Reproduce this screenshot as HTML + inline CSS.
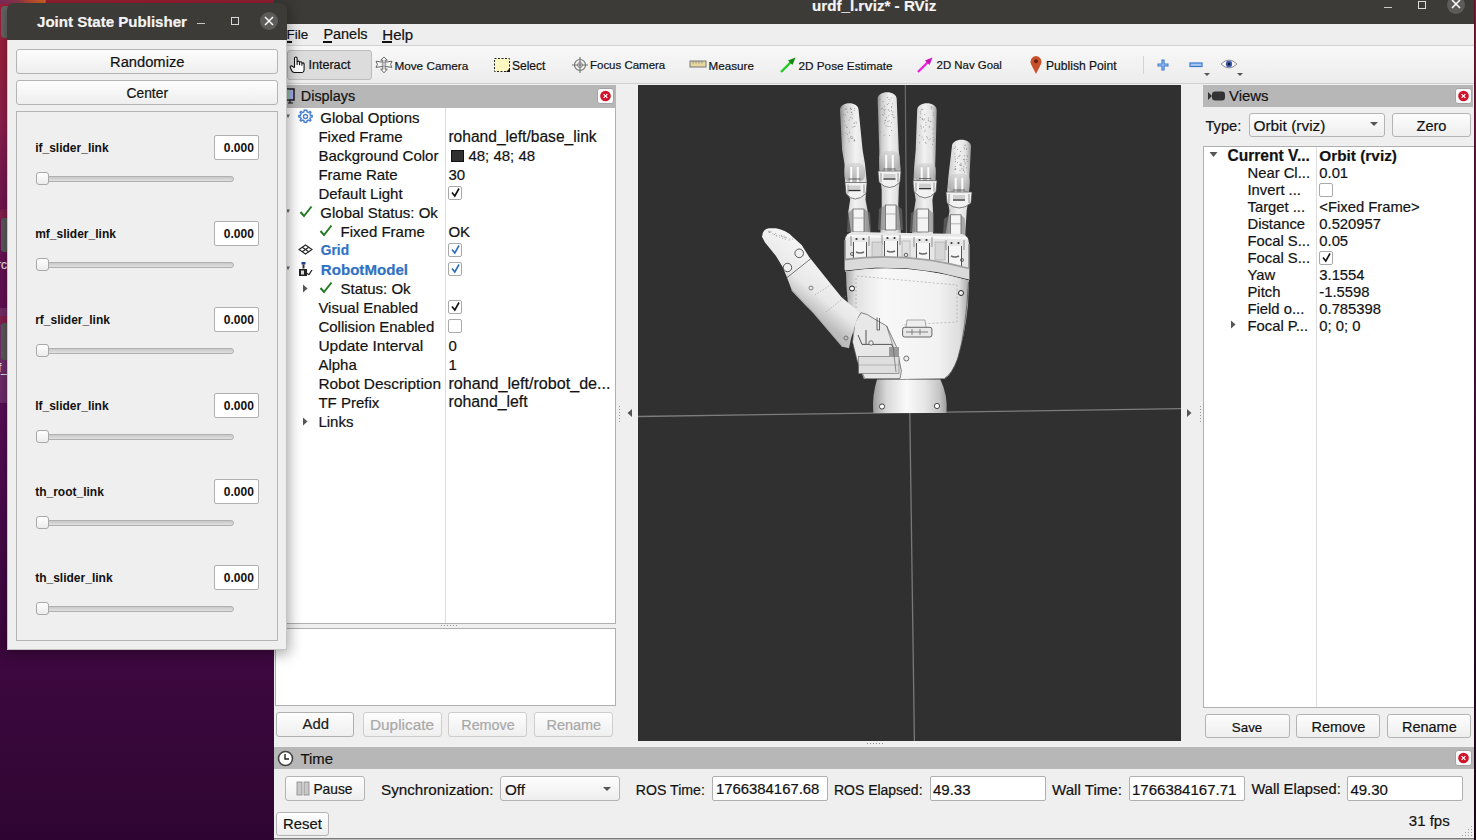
<!DOCTYPE html><html><head><meta charset="utf-8"><style>*{margin:0;padding:0;box-sizing:border-box}
html,body{width:1476px;height:840px;overflow:hidden;background:#3a0a38;font-family:"Liberation Sans",sans-serif;color:#121212}
.a{position:absolute}
.t{position:absolute;white-space:nowrap;-webkit-text-stroke:0.2px currentColor}
.btn{position:absolute;border:1px solid #b6b6b6;border-radius:3px;background:linear-gradient(#fdfdfd,#eeeeee)}
.cb{position:absolute;width:14px;height:14px;border:1px solid #a9a9a9;border-radius:2px;background:#fff}
.xb{position:absolute;width:16px;height:16px;background:#fbfbfb;border:1px solid #a6a6a6;border-radius:3px}
.xb:after{content:"";position:absolute;left:2.5px;top:2.5px;width:10px;height:10px;border-radius:50%;background:#d0152b}
.xb:before{content:"";position:absolute;z-index:1;left:5px;top:5px;width:5px;height:5px;background:linear-gradient(45deg,transparent 40%,#fff 40%,#fff 60%,transparent 60%),linear-gradient(-45deg,transparent 40%,#fff 40%,#fff 60%,transparent 60%)}
.fld{position:absolute;background:#fff;border:1px solid #b3b3b3;border-radius:2px}
</style></head><body>
<div class="a" style="left:0px;top:0px;width:1476px;height:840px;background:linear-gradient(180deg,#a3203e 0px,#a02040 60px,#952050 120px,#7e1854 180px,#6c1256 250px,#5c0e5a 400px,#4c0a4e 520px,#3e0840 650px,#2e0532 840px)"></div>
<div class="a" style="left:0px;top:0px;width:290px;height:4px;background:linear-gradient(90deg,#7a2a5a 0,#9a3a50 18px,#c85034 30px,#e06a2a 45px,#a02236 46.5px,#9e2036 290px)"></div>
<div class="a" style="left:1474px;top:0px;width:2px;height:840px;background:linear-gradient(180deg,#8a1a35 0px,#7c1636 60px,#5e1048 250px,#4a0a48 420px,#3a0838 600px,#200418 840px)"></div>
<div class="a" style="left:1474px;top:0px;width:1px;height:840px;background:rgba(0,0,0,0.3)"></div>
<div class="a" style="left:1px;top:6px;width:8px;height:32px;background:#6a6a6a;border-radius:4px 0 0 4px"></div>
<div class="a" style="left:0px;top:209px;width:8px;height:10px;background:#8a2050;border-radius:3px 0 0 0"></div>
<div class="a" style="left:1px;top:218px;width:7px;height:34px;background:#5e5e5e;border-radius:3px 0 0 3px"></div>
<div class="t" style="left:-3.00px;top:258.84px;font-size:12.00px;line-height:12.00px;color:#f0f0f0;">rc</div>
<div class="a" style="left:0px;top:308px;width:8px;height:95px;background:rgba(255,255,255,0.13)"></div>
<div class="a" style="left:0px;top:316px;width:8px;height:8px;background:#8a2050"></div>
<div class="a" style="left:1px;top:323px;width:7px;height:37px;background:#5e5e5e;border-radius:3px 0 0 3px"></div>
<div class="t" style="left:-2.00px;top:361.84px;font-size:12.00px;line-height:12.00px;color:#f0f0f0;">f_</div>
<div class="a" style="left:274px;top:0px;width:1200px;height:840px;background:#efefef"></div>
<div class="a" style="left:274px;top:0px;width:1200px;height:24px;background:#3c3b38"></div>
<div class="t" style="left:812.00px;top:-2.15px;font-size:15.18px;line-height:15.18px;font-weight:bold;color:#f5f5f5;">urdf_l.rviz* - RViz</div>
<div class="a" style="left:1384px;top:7px;width:8px;height:1px;background:#c8c8c8"></div>
<div class="a" style="left:1418px;top:1px;width:8px;height:8px;border:1px solid #dcdcdc"></div>
<div class="a" style="left:1447px;top:-4px;width:18px;height:18px;background:#5d5c5a;border-radius:50%"></div>
<svg class="a" style="left:1451px;top:0px;" width="10" height="10" viewBox="0 0 10 10"><path d="M1 0 L9 8 M9 0 L1 8" stroke="#fff" stroke-width="1.5"/></svg>
<div class="a" style="left:274px;top:24px;width:1200px;height:22px;background:#eeeeee;border-bottom:1px solid #d2d2d2"></div>
<div class="t" style="left:286.50px;top:28.00px;font-size:13.47px;line-height:13.47px;">File</div>
<div class="t" style="left:323.40px;top:27.16px;font-size:14.46px;line-height:14.46px;">Panels</div>
<div class="t" style="left:382.30px;top:26.68px;font-size:15.03px;line-height:15.03px;">Help</div>
<div class="a" style="left:286px;top:41px;width:6px;height:2px;background:#111"></div>
<div class="a" style="left:323px;top:41px;width:9px;height:2px;background:#111"></div>
<div class="a" style="left:382px;top:41px;width:10px;height:2px;background:#111"></div>
<div class="a" style="left:274px;top:46px;width:1200px;height:38px;background:linear-gradient(#f8f8f8,#ececec);border-bottom:1px solid #d0d0d0"></div>
<div class="a" style="left:287px;top:50px;width:85px;height:30px;background:#dcdcdc;border:1px solid #bcbcbc;border-radius:3px"></div>
<div class="t" style="left:308.40px;top:59.31px;font-size:12.62px;line-height:12.62px;">Interact</div>
<div class="t" style="left:394.40px;top:60.04px;font-size:11.77px;line-height:11.77px;">Move Camera</div>
<div class="t" style="left:511.90px;top:59.77px;font-size:12.09px;line-height:12.09px;">Select</div>
<div class="t" style="left:590.00px;top:60.28px;font-size:11.48px;line-height:11.48px;">Focus Camera</div>
<div class="t" style="left:708.60px;top:60.12px;font-size:11.67px;line-height:11.67px;">Measure</div>
<div class="t" style="left:798.50px;top:60.06px;font-size:11.75px;line-height:11.75px;">2D Pose Estimate</div>
<div class="t" style="left:936.60px;top:60.33px;font-size:11.42px;line-height:11.42px;">2D Nav Goal</div>
<div class="t" style="left:1046.00px;top:59.76px;font-size:12.10px;line-height:12.10px;">Publish Point</div>
<svg class="a" style="left:289px;top:56px;" width="18" height="18" viewBox="0 0 18 18"><path d="M5.5 11.5 V2.3 a1.3 1.3 0 0 1 2.6 0 V8.5 V6.3 a1.2 1.2 0 0 1 2.4 0 V8.8 V7 a1.2 1.2 0 0 1 2.4 0 V9.2 V8 a1.1 1.1 0 0 1 2.2 0 V13.5 Q15.1 16.5 12.5 16.5 H5.5 Q3.4 16.5 2.5 14.2 L1.2 11.2 Q1 9.6 2.7 9.9 L5.5 11.8" fill="#fff" stroke="#111" stroke-width="1.1" stroke-linejoin="round"/></svg>
<svg class="a" style="left:375px;top:56px;" width="18" height="18" viewBox="0 0 18 18"><path d="M9 1 L12.2 4.2 L10.2 4.2 L10.2 6.2 L17 5.2 L15.6 8.4 L17 11.4 L10.2 10.4 L10.2 13.2 L12.2 13.2 L9 16.8 L5.8 13.2 L7.8 13.2 L7.8 10.4 L1 11.4 L2.4 8.4 L1 5.2 L7.8 6.2 L7.8 4.2 L5.8 4.2 Z" fill="#f6f6f6" stroke="#5a5a5a" stroke-width="0.9" stroke-linejoin="round"/><circle cx="9" cy="8.3" r="2" fill="#c8c8c8" stroke="#777" stroke-width="0.6"/></svg>
<svg class="a" style="left:493px;top:56px;" width="18" height="18" viewBox="0 0 18 18"><rect x="1.5" y="2.5" width="15" height="13" fill="#fdf7c0" stroke="#222" stroke-width="1" stroke-dasharray="2 1.5"/><path d="M13 16 L17 16 L17 12 Z" fill="#111"/></svg>
<svg class="a" style="left:571px;top:56px;" width="18" height="18" viewBox="0 0 18 18"><circle cx="9" cy="9" r="5.5" fill="none" stroke="#777" stroke-width="1.2"/><circle cx="9" cy="9" r="2.5" fill="none" stroke="#888" stroke-width="1"/><path d="M9 1 L9 17 M1 9 L17 9" stroke="#777" stroke-width="1.2"/></svg>
<svg class="a" style="left:689px;top:58px;" width="18" height="14" viewBox="0 0 18 14"><rect x="1" y="3" width="16" height="6" fill="#e8d8a0" stroke="#777" stroke-width="1"/><path d="M4 3 L4 5.5 M7 3 L7 5.5 M10 3 L10 5.5 M13 3 L13 5.5" stroke="#777" stroke-width="0.8"/></svg>
<svg class="a" style="left:779px;top:56px;" width="18" height="18" viewBox="0 0 18 18"><path d="M2 16 L12 6" stroke="#22cc22" stroke-width="2.4"/><path d="M16.5 1.5 L9 4.5 L13.5 9 Z" fill="#118811"/></svg>
<svg class="a" style="left:916px;top:56px;" width="18" height="18" viewBox="0 0 18 18"><path d="M2 16 L12 6" stroke="#ee22dd" stroke-width="2.4"/><path d="M16.5 1.5 L9 4.5 L13.5 9 Z" fill="#cc11bb"/></svg>
<svg class="a" style="left:1029px;top:55px;" width="14" height="20" viewBox="0 0 14 20"><path d="M7 19 L2.2 9.5 Q0.8 6.5 2.2 4 Q4 1 7 1 Q10 1 11.8 4 Q13.2 6.5 11.8 9.5 Z" fill="#c8502a"/><circle cx="7" cy="6.2" r="2" fill="#6a2010"/></svg>
<div class="a" style="left:1143px;top:56px;width:1px;height:18px;background:#d4d4d4"></div>
<svg class="a" style="left:1156px;top:58px;" width="14" height="14" viewBox="0 0 14 14"><path d="M7 1.5 L7 12.5 M1.5 7 L12.5 7" stroke="#3a78d0" stroke-width="3.2"/><path d="M7 2.5 L7 11.5 M2.5 7 L11.5 7" stroke="#a8c8f0" stroke-width="1"/></svg>
<svg class="a" style="left:1189px;top:61px;" width="14" height="8" viewBox="0 0 14 8"><rect x="1" y="2" width="12" height="3.5" fill="#a8c8f0" stroke="#3a78d0" stroke-width="1.2"/></svg>
<svg class="a" style="left:1204px;top:73px;" width="6" height="4" viewBox="0 0 6 4"><path d="M0 0 L6 0 L3 3 Z" fill="#555"/></svg>
<svg class="a" style="left:1220px;top:58px;" width="18" height="12" viewBox="0 0 18 12"><path d="M1 6 Q9 -2 17 6 Q9 14 1 6 Z" fill="#fff" stroke="#888" stroke-width="1"/><circle cx="9" cy="6" r="3.2" fill="#3a5ab0"/><circle cx="9" cy="6" r="1.2" fill="#111"/></svg>
<svg class="a" style="left:1237px;top:73px;" width="6" height="4" viewBox="0 0 6 4"><path d="M0 0 L6 0 L3 3 Z" fill="#555"/></svg>
<div class="a" style="left:276px;top:85px;width:340px;height:23px;background:#b7b7b7"></div>
<svg class="a" style="left:285px;top:88px;" width="12" height="16" viewBox="0 0 12 16"><rect x="1" y="1" width="8" height="11" fill="#a8a8f0" stroke="#111" stroke-width="1.4"/><rect x="1.7" y="1.7" width="2.2" height="9.6" fill="#8ac890"/><path d="M3 15 L8 15 M5 12 L5 15" stroke="#111" stroke-width="1.2"/></svg>
<div class="t" style="left:300.80px;top:89.39px;font-size:14.42px;line-height:14.42px;">Displays</div>
<svg class="a" style="left:597px;top:87.5px;" width="17" height="16" viewBox="0 0 17 16"><rect x="0.5" y="0.5" width="16" height="15" rx="2.5" fill="#fbfbfb" stroke="#a4a4a4"/><circle cx="8.5" cy="8" r="5.3" fill="#d0142c"/><path d="M6.6 6.1 L10.4 9.9 M10.4 6.1 L6.6 9.9" stroke="#fff" stroke-width="1.2"/></svg>
<div class="a" style="left:276px;top:108px;width:340px;height:516px;background:#fff;border:1px solid #b0b0b0;border-top:none"></div>
<div class="a" style="left:445px;top:108px;width:1px;height:515px;background:#dcdcdc"></div>
<div class="t" style="left:320.30px;top:110.10px;font-size:15.00px;line-height:15.00px;">Global Options</div>
<div class="t" style="left:318.40px;top:129.10px;font-size:15.00px;line-height:15.00px;">Fixed Frame</div>
<div class="t" style="left:448.40px;top:128.59px;font-size:15.60px;line-height:15.60px;">rohand_left/base_link</div>
<div class="t" style="left:318.40px;top:148.10px;font-size:15.00px;line-height:15.00px;">Background Color</div>
<div class="a" style="left:451px;top:149.5px;width:13px;height:12px;background:#303030;border:1px solid #111"></div>
<div class="t" style="left:468.40px;top:148.10px;font-size:15.00px;line-height:15.00px;">48; 48; 48</div>
<div class="t" style="left:318.40px;top:167.10px;font-size:15.00px;line-height:15.00px;">Frame Rate</div>
<div class="t" style="left:448.40px;top:167.10px;font-size:15.00px;line-height:15.00px;">30</div>
<div class="t" style="left:318.40px;top:186.10px;font-size:15.00px;line-height:15.00px;">Default Light</div>
<div class="cb" style="left:448px;top:186.3px"></div>
<svg class="a" style="left:449px;top:186px;" width="13" height="13" viewBox="0 0 13 13"><path d="M3 6.5 L5.8 10 L10 2.5" fill="none" stroke="#111" stroke-width="1.6"/></svg>
<div class="t" style="left:320.30px;top:205.10px;font-size:15.00px;line-height:15.00px;">Global Status: Ok</div>
<div class="t" style="left:340.60px;top:224.10px;font-size:15.00px;line-height:15.00px;">Fixed Frame</div>
<div class="t" style="left:448.40px;top:224.10px;font-size:15.00px;line-height:15.00px;">OK</div>
<div class="t" style="left:320.80px;top:244.15px;font-size:13.77px;line-height:13.77px;font-weight:bold;color:#2f72c4;">Grid</div>
<div class="cb" style="left:448px;top:243.3px"></div>
<svg class="a" style="left:449px;top:243px;" width="13" height="13" viewBox="0 0 13 13"><path d="M3 6.5 L5.8 10 L10 2.5" fill="none" stroke="#2f6fc0" stroke-width="1.6"/></svg>
<div class="t" style="left:320.80px;top:262.02px;font-size:15.10px;line-height:15.10px;font-weight:bold;color:#2f72c4;">RobotModel</div>
<div class="cb" style="left:448px;top:262.3px"></div>
<svg class="a" style="left:449px;top:262px;" width="13" height="13" viewBox="0 0 13 13"><path d="M3 6.5 L5.8 10 L10 2.5" fill="none" stroke="#2f6fc0" stroke-width="1.6"/></svg>
<div class="t" style="left:340.60px;top:281.10px;font-size:15.00px;line-height:15.00px;">Status: Ok</div>
<div class="t" style="left:318.40px;top:300.10px;font-size:15.00px;line-height:15.00px;">Visual Enabled</div>
<div class="cb" style="left:448px;top:300.3px"></div>
<svg class="a" style="left:449px;top:300px;" width="13" height="13" viewBox="0 0 13 13"><path d="M3 6.5 L5.8 10 L10 2.5" fill="none" stroke="#111" stroke-width="1.6"/></svg>
<div class="t" style="left:318.40px;top:319.10px;font-size:15.00px;line-height:15.00px;">Collision Enabled</div>
<div class="cb" style="left:448px;top:319.3px"></div>
<div class="t" style="left:318.40px;top:337.71px;font-size:15.47px;line-height:15.47px;">Update Interval</div>
<div class="t" style="left:448.40px;top:338.10px;font-size:15.00px;line-height:15.00px;">0</div>
<div class="t" style="left:318.40px;top:357.10px;font-size:15.00px;line-height:15.00px;">Alpha</div>
<div class="t" style="left:448.40px;top:357.10px;font-size:15.00px;line-height:15.00px;">1</div>
<div class="t" style="left:318.40px;top:375.74px;font-size:15.43px;line-height:15.43px;">Robot Description</div>
<div class="t" style="left:448.40px;top:375.15px;font-size:16.12px;line-height:16.12px;">rohand_left/robot_de...</div>
<div class="t" style="left:318.40px;top:395.10px;font-size:15.00px;line-height:15.00px;">TF Prefix</div>
<div class="t" style="left:448.40px;top:394.38px;font-size:15.85px;line-height:15.85px;">rohand_left</div>
<div class="t" style="left:318.40px;top:414.10px;font-size:15.00px;line-height:15.00px;">Links</div>
<svg class="a" style="left:286px;top:114px;" width="5" height="6" viewBox="0 0 5 6"><path d="M0 0.5 L4 0.5 L2 4 Z" fill="#666"/></svg>
<svg class="a" style="left:286px;top:209px;" width="5" height="6" viewBox="0 0 5 6"><path d="M0 0.5 L4 0.5 L2 4 Z" fill="#666"/></svg>
<svg class="a" style="left:286px;top:266px;" width="5" height="6" viewBox="0 0 5 6"><path d="M0 0.5 L4 0.5 L2 4 Z" fill="#666"/></svg>
<svg class="a" style="left:298px;top:109px;" width="15" height="15" viewBox="0 0 15 15"><g transform="translate(7.5 7.5)" fill="none" stroke="#4a7fd0" stroke-width="1.4"><circle r="2"/><path d="M0 -6.3 L1.3 -6.3 L1.6 -4.6 L3.1 -4 L4.5 -5 L5.4 -4.1 L4.4 -2.7 L5 -1.2 L6.7 -0.9 L6.7 0.4 L5 0.7 L4.4 2.2 L5.4 3.6 L4.5 4.5 L3.1 3.5 L1.6 4.1 L1.3 5.8 L-1.3 5.8 L-1.6 4.1 L-3.1 3.5 L-4.5 4.5 L-5.4 3.6 L-4.4 2.2 L-5 0.7 L-6.7 0.4 L-6.7 -0.9 L-5 -1.2 L-4.4 -2.7 L-5.4 -4.1 L-4.5 -5 L-3.1 -4 L-1.6 -4.6 L-1.3 -6.3 Z"/></g></svg>
<svg class="a" style="left:298.5px;top:205px;" width="14" height="13" viewBox="0 0 14 13"><path d="M1.5 7 L5 11 L12.5 1.5" fill="none" stroke="#237a23" stroke-width="2"/></svg>
<svg class="a" style="left:318.5px;top:224px;" width="14" height="13" viewBox="0 0 14 13"><path d="M1.5 7 L5 11 L12.5 1.5" fill="none" stroke="#237a23" stroke-width="2"/></svg>
<svg class="a" style="left:318.5px;top:281px;" width="14" height="13" viewBox="0 0 14 13"><path d="M1.5 7 L5 11 L12.5 1.5" fill="none" stroke="#237a23" stroke-width="2"/></svg>
<svg class="a" style="left:298px;top:244px;" width="15" height="11" viewBox="0 0 15 11"><g fill="none" stroke="#222" stroke-width="1.1"><path d="M7.5 1 L14 5.5 L7.5 10 L1 5.5 Z"/><path d="M4.25 3.25 L10.75 7.75 M10.75 3.25 L4.25 7.75"/></g></svg>
<svg class="a" style="left:298px;top:261px;" width="15" height="16" viewBox="0 0 15 16"><rect x="3.5" y="1" width="4" height="2.5" fill="#2040a0"/><rect x="4.5" y="3.5" width="2" height="4" fill="#333"/><rect x="1" y="8" width="8" height="7" fill="#222"/><rect x="3" y="9.5" width="3" height="4" fill="#ddd"/><path d="M9 12 Q11 15 12 12 L14 9" fill="none" stroke="#222" stroke-width="1.3"/></svg>
<svg class="a" style="left:302px;top:284px;" width="6" height="9" viewBox="0 0 6 9"><path d="M1 0.5 L5.5 4.5 L1 8.5 Z" fill="#555"/></svg>
<svg class="a" style="left:302px;top:417px;" width="6" height="9" viewBox="0 0 6 9"><path d="M1 0.5 L5.5 4.5 L1 8.5 Z" fill="#555"/></svg>
<div class="a" style="left:441px;top:625px;width:1px;height:1px;background:#999"></div>
<div class="a" style="left:444px;top:625px;width:1px;height:1px;background:#999"></div>
<div class="a" style="left:447px;top:625px;width:1px;height:1px;background:#999"></div>
<div class="a" style="left:450px;top:625px;width:1px;height:1px;background:#999"></div>
<div class="a" style="left:453px;top:625px;width:1px;height:1px;background:#999"></div>
<div class="a" style="left:456px;top:625px;width:1px;height:1px;background:#999"></div>
<div class="a" style="left:275px;top:628px;width:341px;height:78px;background:#fff;border:1px solid #b0b0b0"></div>
<div class="a" style="left:276px;top:712px;width:78px;height:25px;border:1px solid #b0b0b0;border-radius:3px;background:linear-gradient(#fdfdfd,#efefef)"></div>
<div class="t" style="left:302.50px;top:717.19px;font-size:14.89px;line-height:14.89px;color:#1c1c1c;">Add</div>
<div class="a" style="left:363px;top:712px;width:79px;height:25px;border:1px solid #cdcdcd;border-radius:3px;background:linear-gradient(#fdfdfd,#efefef)"></div>
<div class="t" style="left:370.00px;top:716.80px;font-size:15.35px;line-height:15.35px;color:#a8a8a8;">Duplicate</div>
<div class="a" style="left:448px;top:712px;width:79px;height:25px;border:1px solid #cdcdcd;border-radius:3px;background:linear-gradient(#fdfdfd,#efefef)"></div>
<div class="t" style="left:461.30px;top:717.66px;font-size:14.34px;line-height:14.34px;color:#a8a8a8;">Remove</div>
<div class="a" style="left:534px;top:712px;width:79px;height:25px;border:1px solid #cdcdcd;border-radius:3px;background:linear-gradient(#fdfdfd,#efefef)"></div>
<div class="t" style="left:546.50px;top:717.59px;font-size:14.42px;line-height:14.42px;color:#a8a8a8;">Rename</div>
<div class="a" style="left:619px;top:406px;width:1px;height:1px;background:#999"></div>
<div class="a" style="left:619px;top:409px;width:1px;height:1px;background:#999"></div>
<div class="a" style="left:619px;top:412px;width:1px;height:1px;background:#999"></div>
<div class="a" style="left:619px;top:415px;width:1px;height:1px;background:#999"></div>
<div class="a" style="left:619px;top:418px;width:1px;height:1px;background:#999"></div>
<div class="a" style="left:619px;top:421px;width:1px;height:1px;background:#999"></div>
<svg class="a" style="left:627px;top:409px;" width="6" height="8" viewBox="0 0 6 8"><path d="M5 0 L0.5 4 L5 8 Z" fill="#555"/></svg>
<div class="a" style="left:638px;top:85px;width:543px;height:656px;background:#303030"></div>
<svg class="a" style="left:638px;top:85px" width="543" height="656" viewBox="638 85 543 656"><defs>
<linearGradient id="fg" x1="0" x2="1" y1="0" y2="0"><stop offset="0" stop-color="#8a8a8a"/><stop offset="0.18" stop-color="#cfcfcf"/><stop offset="0.5" stop-color="#f2f2f2"/><stop offset="0.8" stop-color="#e2e2e2"/><stop offset="1" stop-color="#9a9a9a"/></linearGradient>
<linearGradient id="pg" x1="0" x2="1" y1="0" y2="0"><stop offset="0" stop-color="#b8b8b8"/><stop offset="0.1" stop-color="#ececec"/><stop offset="0.5" stop-color="#f6f6f6"/><stop offset="0.85" stop-color="#ededed"/><stop offset="1" stop-color="#bdbdbd"/></linearGradient>
<linearGradient id="wg" x1="0" x2="1" y1="0" y2="0"><stop offset="0" stop-color="#a8a8a8"/><stop offset="0.25" stop-color="#dcdcdc"/><stop offset="0.5" stop-color="#ffffff"/><stop offset="0.75" stop-color="#e2e2e2"/><stop offset="1" stop-color="#a0a0a0"/></linearGradient>
<linearGradient id="tg" x1="0" x2="0.35" y1="0" y2="1"><stop offset="0" stop-color="#f4f4f4"/><stop offset="0.6" stop-color="#e6e6e6"/><stop offset="1" stop-color="#a6a6a6"/></linearGradient>
<linearGradient id="cap" x1="0" x2="0" y1="0" y2="1"><stop offset="0" stop-color="#d0d0d0"/><stop offset="1" stop-color="#8c8c8c"/></linearGradient>
</defs><path d="M638 416.5 L1181 408.7" stroke="#7c7c7c" stroke-width="1.3"/><path d="M905.3 85 L907.8 412" stroke="#6a6a6a" stroke-width="1.2"/><path d="M909.8 413 L914.4 741" stroke="#787878" stroke-width="1.3"/><path d="M840,110 C840,101 858.6,101 858.6,110 L862.6,150 L865,164 L866.9,183 L865.5,199.5 L867.9,212 L871,240 L852,240 L848.3,212 L850.2,199.5 L845,183 L844.5,164 L842.1,150 Z" fill="url(#fg)"/><path d="M877.6,99 C877.6,90 896.7,90 896.7,99 L898.8,150 L900.7,170 L898.8,190 L898.3,205 L901.7,240 L880,240 L881.7,205 L881.7,190 L879.3,170 L879.3,150 Z" fill="url(#fg)"/><path d="M917.2,110 C917.2,101 936.7,101 936.7,110 L935.7,150 L935.2,165 L935.7,184 L932.4,200 L933.3,215 L933,240 L911.4,240 L913.3,215 L915.7,200 L913.3,184 L914.3,165 L915.7,150 Z" fill="url(#fg)"/><path d="M951.9,146.5 C951.9,137.5 971,137.5 971,146.5 L969.5,175 L969,195 L966.7,211 L964.8,240 L944.5,240 L949.5,211 L946.7,195 L948.6,175 Z" fill="url(#fg)"/><rect x="844" y="163" width="21" height="19" rx="7" fill="url(#cap)" opacity="0.6"/><path d="M851.2 167 L851.2 184 M857.8 167 L857.8 184" stroke="#fcfcfc" stroke-width="2"/><path d="M848.5 179 L860.5 179" stroke="#444" stroke-width="0.8"/><path d="M845 182.5 L846 193.5 Q854.5 204.5 866 193.5 L867 182.5 Z" fill="#f2f2f2" stroke="#4a4a4a" stroke-width="0.7"/><rect x="848.5" y="185.5" width="12" height="6" fill="#cfcfcf"/><path d="M848.5 190.5 L860.5 190.5" stroke="#333" stroke-width="1.2"/><path d="M848 184.5 L848 193.5 M864 184.5 L864 193.5" stroke="#555" stroke-width="0.6"/><path d="M848 213 L853 209 L853 232 L847 232 Z" fill="#777" opacity="0.55"/><path d="M870 213 L864 209 L864 232 L871 232 Z" fill="#777" opacity="0.55"/><rect x="853" y="209" width="11" height="23" fill="#f4f4f4" stroke="#555" stroke-width="0.7"/><path d="M853 218 L864 218" stroke="#888" stroke-width="0.6"/><rect x="879" y="151" width="21" height="21" rx="7" fill="url(#cap)" opacity="0.6"/><path d="M886.2 155 L886.2 174 M892.8 155 L892.8 174" stroke="#fcfcfc" stroke-width="2"/><path d="M883.5 169 L895.5 169" stroke="#444" stroke-width="0.8"/><path d="M878 171 L879 182 Q889.5 193 900 182 L901 171 Z" fill="#f2f2f2" stroke="#4a4a4a" stroke-width="0.7"/><rect x="883.5" y="174" width="12" height="6" fill="#cfcfcf"/><path d="M883.5 179 L895.5 179" stroke="#333" stroke-width="1.2"/><path d="M881 173 L881 182 M898 173 L898 182" stroke="#555" stroke-width="0.6"/><path d="M879 209 L885.5 205 L885.5 230 L878 230 Z" fill="#777" opacity="0.55"/><path d="M902 209 L896 205 L896 230 L903 230 Z" fill="#777" opacity="0.55"/><rect x="885.5" y="205" width="10.5" height="25" fill="#f4f4f4" stroke="#555" stroke-width="0.7"/><path d="M885.5 214 L896 214" stroke="#888" stroke-width="0.6"/><rect x="914" y="163.3" width="22" height="18.299999999999983" rx="7" fill="url(#cap)" opacity="0.6"/><path d="M921.7 167.3 L921.7 183.6 M928.3 167.3 L928.3 183.6" stroke="#fcfcfc" stroke-width="2"/><path d="M919.0 178.6 L931.0 178.6" stroke="#444" stroke-width="0.8"/><path d="M913 180.6 L914 191.6 Q925.0 204.4 936 191.6 L937 180.6 Z" fill="#f2f2f2" stroke="#4a4a4a" stroke-width="0.7"/><rect x="919.0" y="183.6" width="12" height="6" fill="#cfcfcf"/><path d="M919.0 188.6 L931.0 188.6" stroke="#333" stroke-width="1.2"/><path d="M916 182.6 L916 191.6 M934 182.6 L934 191.6" stroke="#555" stroke-width="0.6"/><path d="M911 213 L917 209 L917 232 L910 232 Z" fill="#777" opacity="0.55"/><path d="M933 213 L928.6 209 L928.6 232 L934 232 Z" fill="#777" opacity="0.55"/><rect x="917" y="209" width="11.600000000000023" height="23" fill="#f4f4f4" stroke="#555" stroke-width="0.7"/><path d="M917 218 L928.6 218" stroke="#888" stroke-width="0.6"/><rect x="948" y="173.8" width="22" height="19.19999999999999" rx="7" fill="url(#cap)" opacity="0.6"/><path d="M955.7 177.8 L955.7 195 M962.3 177.8 L962.3 195" stroke="#fcfcfc" stroke-width="2"/><path d="M953.0 190 L965.0 190" stroke="#444" stroke-width="0.8"/><path d="M946 192 L947 203 Q959.0 213 971 203 L972 192 Z" fill="#f2f2f2" stroke="#4a4a4a" stroke-width="0.7"/><rect x="953.0" y="195" width="12" height="6" fill="#cfcfcf"/><path d="M953.0 200 L965.0 200" stroke="#333" stroke-width="1.2"/><path d="M949 194 L949 203 M969 194 L969 203" stroke="#555" stroke-width="0.6"/><path d="M944 218.8 L950.5 214.8 L950.5 236 L943 236 Z" fill="#777" opacity="0.55"/><path d="M965 218.8 L961 214.8 L961 236 L966 236 Z" fill="#777" opacity="0.55"/><rect x="950.5" y="214.8" width="10.5" height="21.19999999999999" fill="#f4f4f4" stroke="#555" stroke-width="0.7"/><path d="M950.5 223.8 L961 223.8" stroke="#888" stroke-width="0.6"/><circle cx="845.1" cy="125.5" r="0.5" fill="#8a8a8a"/><circle cx="847.0" cy="127.5" r="0.5" fill="#8a8a8a"/><circle cx="850.9" cy="109.2" r="0.5" fill="#8a8a8a"/><circle cx="841.7" cy="135.5" r="0.5" fill="#8a8a8a"/><circle cx="845.4" cy="115.0" r="0.5" fill="#8a8a8a"/><circle cx="856.4" cy="123.0" r="0.5" fill="#8a8a8a"/><circle cx="854.0" cy="123.2" r="0.5" fill="#8a8a8a"/><circle cx="851.1" cy="112.1" r="0.5" fill="#8a8a8a"/><circle cx="851.0" cy="136.5" r="0.5" fill="#8a8a8a"/><circle cx="849.3" cy="132.2" r="0.5" fill="#8a8a8a"/><circle cx="851.6" cy="109.2" r="0.5" fill="#8a8a8a"/><circle cx="852.9" cy="127.1" r="0.5" fill="#8a8a8a"/><circle cx="846.0" cy="108.1" r="0.5" fill="#8a8a8a"/><circle cx="854.5" cy="123.1" r="0.5" fill="#8a8a8a"/><circle cx="852.3" cy="136.9" r="0.5" fill="#8a8a8a"/><circle cx="852.2" cy="138.3" r="0.5" fill="#8a8a8a"/><circle cx="847.4" cy="134.2" r="0.5" fill="#8a8a8a"/><circle cx="848.2" cy="138.8" r="0.5" fill="#8a8a8a"/><circle cx="854.7" cy="110.3" r="0.5" fill="#8a8a8a"/><circle cx="843.5" cy="114.4" r="0.5" fill="#8a8a8a"/><circle cx="856.0" cy="121.8" r="0.5" fill="#8a8a8a"/><circle cx="850.9" cy="117.2" r="0.5" fill="#8a8a8a"/><circle cx="849.1" cy="120.1" r="0.5" fill="#8a8a8a"/><circle cx="846.8" cy="126.9" r="0.5" fill="#8a8a8a"/><circle cx="850.3" cy="137.7" r="0.5" fill="#8a8a8a"/><circle cx="851.7" cy="138.6" r="0.5" fill="#8a8a8a"/><circle cx="854.3" cy="140.7" r="0.5" fill="#8a8a8a"/><circle cx="851.6" cy="112.5" r="0.5" fill="#8a8a8a"/><circle cx="854.4" cy="139.8" r="0.5" fill="#8a8a8a"/><circle cx="855.1" cy="126.3" r="0.5" fill="#8a8a8a"/><circle cx="852.2" cy="114.2" r="0.5" fill="#8a8a8a"/><circle cx="854.0" cy="126.5" r="0.5" fill="#8a8a8a"/><circle cx="845.8" cy="109.2" r="0.5" fill="#8a8a8a"/><circle cx="854.3" cy="140.7" r="0.5" fill="#8a8a8a"/><circle cx="842.8" cy="134.2" r="0.5" fill="#8a8a8a"/><circle cx="847.7" cy="112.1" r="0.5" fill="#8a8a8a"/><circle cx="845.9" cy="133.1" r="0.5" fill="#8a8a8a"/><circle cx="854.6" cy="108.5" r="0.5" fill="#8a8a8a"/><circle cx="850.7" cy="108.5" r="0.5" fill="#8a8a8a"/><circle cx="852.3" cy="118.3" r="0.5" fill="#8a8a8a"/><circle cx="854.7" cy="140.3" r="0.5" fill="#8a8a8a"/><circle cx="849.1" cy="140.9" r="0.5" fill="#8a8a8a"/><circle cx="846.1" cy="109.6" r="0.5" fill="#8a8a8a"/><circle cx="850.5" cy="108.1" r="0.5" fill="#8a8a8a"/><circle cx="844.5" cy="120.9" r="0.5" fill="#8a8a8a"/><circle cx="888.7" cy="103.2" r="0.5" fill="#8a8a8a"/><circle cx="880.1" cy="131.7" r="0.5" fill="#8a8a8a"/><circle cx="884.2" cy="135.3" r="0.5" fill="#8a8a8a"/><circle cx="892.9" cy="112.1" r="0.5" fill="#8a8a8a"/><circle cx="886.4" cy="117.8" r="0.5" fill="#8a8a8a"/><circle cx="889.2" cy="120.8" r="0.5" fill="#8a8a8a"/><circle cx="887.9" cy="121.8" r="0.5" fill="#8a8a8a"/><circle cx="893.6" cy="117.3" r="0.5" fill="#8a8a8a"/><circle cx="886.0" cy="125.8" r="0.5" fill="#8a8a8a"/><circle cx="883.1" cy="109.0" r="0.5" fill="#8a8a8a"/><circle cx="894.2" cy="117.8" r="0.5" fill="#8a8a8a"/><circle cx="887.7" cy="97.5" r="0.5" fill="#8a8a8a"/><circle cx="885.7" cy="120.2" r="0.5" fill="#8a8a8a"/><circle cx="879.8" cy="121.6" r="0.5" fill="#8a8a8a"/><circle cx="889.0" cy="99.4" r="0.5" fill="#8a8a8a"/><circle cx="888.9" cy="115.7" r="0.5" fill="#8a8a8a"/><circle cx="889.7" cy="111.1" r="0.5" fill="#8a8a8a"/><circle cx="890.1" cy="126.5" r="0.5" fill="#8a8a8a"/><circle cx="879.8" cy="99.4" r="0.5" fill="#8a8a8a"/><circle cx="889.6" cy="135.5" r="0.5" fill="#8a8a8a"/><circle cx="883.3" cy="115.3" r="0.5" fill="#8a8a8a"/><circle cx="888.4" cy="109.8" r="0.5" fill="#8a8a8a"/><circle cx="885.0" cy="109.5" r="0.5" fill="#8a8a8a"/><circle cx="885.0" cy="120.8" r="0.5" fill="#8a8a8a"/><circle cx="884.0" cy="112.1" r="0.5" fill="#8a8a8a"/><circle cx="891.1" cy="98.1" r="0.5" fill="#8a8a8a"/><circle cx="888.0" cy="126.4" r="0.5" fill="#8a8a8a"/><circle cx="884.2" cy="105.9" r="0.5" fill="#8a8a8a"/><circle cx="891.6" cy="106.5" r="0.5" fill="#8a8a8a"/><circle cx="882.3" cy="114.4" r="0.5" fill="#8a8a8a"/><circle cx="890.0" cy="101.1" r="0.5" fill="#8a8a8a"/><circle cx="884.3" cy="110.4" r="0.5" fill="#8a8a8a"/><circle cx="892.0" cy="114.5" r="0.5" fill="#8a8a8a"/><circle cx="892.3" cy="103.8" r="0.5" fill="#8a8a8a"/><circle cx="884.6" cy="123.0" r="0.5" fill="#8a8a8a"/><circle cx="892.8" cy="115.0" r="0.5" fill="#8a8a8a"/><circle cx="882.9" cy="101.8" r="0.5" fill="#8a8a8a"/><circle cx="887.4" cy="104.6" r="0.5" fill="#8a8a8a"/><circle cx="891.6" cy="130.5" r="0.5" fill="#8a8a8a"/><circle cx="882.3" cy="108.1" r="0.5" fill="#8a8a8a"/><circle cx="891.6" cy="122.7" r="0.5" fill="#8a8a8a"/><circle cx="891.6" cy="110.8" r="0.5" fill="#8a8a8a"/><circle cx="881.4" cy="108.7" r="0.5" fill="#8a8a8a"/><circle cx="891.4" cy="107.8" r="0.5" fill="#8a8a8a"/><circle cx="884.7" cy="113.7" r="0.5" fill="#8a8a8a"/><circle cx="925.8" cy="122.6" r="0.5" fill="#8a8a8a"/><circle cx="933.3" cy="112.9" r="0.5" fill="#8a8a8a"/><circle cx="919.6" cy="142.8" r="0.5" fill="#8a8a8a"/><circle cx="932.7" cy="144.5" r="0.5" fill="#8a8a8a"/><circle cx="926.0" cy="143.1" r="0.5" fill="#8a8a8a"/><circle cx="933.4" cy="115.4" r="0.5" fill="#8a8a8a"/><circle cx="930.7" cy="138.8" r="0.5" fill="#8a8a8a"/><circle cx="929.4" cy="126.7" r="0.5" fill="#8a8a8a"/><circle cx="923.8" cy="120.0" r="0.5" fill="#8a8a8a"/><circle cx="922.9" cy="109.6" r="0.5" fill="#8a8a8a"/><circle cx="928.3" cy="117.9" r="0.5" fill="#8a8a8a"/><circle cx="931.7" cy="108.7" r="0.5" fill="#8a8a8a"/><circle cx="933.1" cy="133.4" r="0.5" fill="#8a8a8a"/><circle cx="933.4" cy="141.1" r="0.5" fill="#8a8a8a"/><circle cx="933.0" cy="128.9" r="0.5" fill="#8a8a8a"/><circle cx="919.7" cy="135.3" r="0.5" fill="#8a8a8a"/><circle cx="922.1" cy="118.4" r="0.5" fill="#8a8a8a"/><circle cx="929.4" cy="126.9" r="0.5" fill="#8a8a8a"/><circle cx="925.7" cy="142.7" r="0.5" fill="#8a8a8a"/><circle cx="928.7" cy="120.0" r="0.5" fill="#8a8a8a"/><circle cx="923.3" cy="139.7" r="0.5" fill="#8a8a8a"/><circle cx="926.7" cy="136.7" r="0.5" fill="#8a8a8a"/><circle cx="924.8" cy="114.5" r="0.5" fill="#8a8a8a"/><circle cx="927.5" cy="138.0" r="0.5" fill="#8a8a8a"/><circle cx="922.1" cy="137.1" r="0.5" fill="#8a8a8a"/><circle cx="933.3" cy="137.6" r="0.5" fill="#8a8a8a"/><circle cx="931.9" cy="107.3" r="0.5" fill="#8a8a8a"/><circle cx="928.9" cy="139.8" r="0.5" fill="#8a8a8a"/><circle cx="920.2" cy="117.3" r="0.5" fill="#8a8a8a"/><circle cx="923.5" cy="127.0" r="0.5" fill="#8a8a8a"/><circle cx="925.8" cy="125.0" r="0.5" fill="#8a8a8a"/><circle cx="931.1" cy="107.1" r="0.5" fill="#8a8a8a"/><circle cx="920.3" cy="111.8" r="0.5" fill="#8a8a8a"/><circle cx="921.4" cy="109.6" r="0.5" fill="#8a8a8a"/><circle cx="934.1" cy="139.5" r="0.5" fill="#8a8a8a"/><circle cx="920.8" cy="126.1" r="0.5" fill="#8a8a8a"/><circle cx="924.2" cy="119.0" r="0.5" fill="#8a8a8a"/><circle cx="924.8" cy="131.6" r="0.5" fill="#8a8a8a"/><circle cx="928.3" cy="120.7" r="0.5" fill="#8a8a8a"/><circle cx="922.4" cy="119.5" r="0.5" fill="#8a8a8a"/><circle cx="921.4" cy="128.1" r="0.5" fill="#8a8a8a"/><circle cx="930.2" cy="121.4" r="0.5" fill="#8a8a8a"/><circle cx="920.7" cy="113.8" r="0.5" fill="#8a8a8a"/><circle cx="925.1" cy="130.0" r="0.5" fill="#8a8a8a"/><circle cx="931.2" cy="121.5" r="0.5" fill="#8a8a8a"/><circle cx="965.2" cy="162.7" r="0.5" fill="#8a8a8a"/><circle cx="960.0" cy="155.2" r="0.5" fill="#8a8a8a"/><circle cx="960.9" cy="165.1" r="0.5" fill="#8a8a8a"/><circle cx="959.9" cy="164.8" r="0.5" fill="#8a8a8a"/><circle cx="960.5" cy="151.4" r="0.5" fill="#8a8a8a"/><circle cx="961.5" cy="164.9" r="0.5" fill="#8a8a8a"/><circle cx="955.0" cy="156.7" r="0.5" fill="#8a8a8a"/><circle cx="960.0" cy="170.4" r="0.5" fill="#8a8a8a"/><circle cx="967.1" cy="155.2" r="0.5" fill="#8a8a8a"/><circle cx="966.6" cy="167.7" r="0.5" fill="#8a8a8a"/><circle cx="957.7" cy="157.9" r="0.5" fill="#8a8a8a"/><circle cx="955.7" cy="168.4" r="0.5" fill="#8a8a8a"/><circle cx="963.3" cy="170.6" r="0.5" fill="#8a8a8a"/><circle cx="965.1" cy="164.0" r="0.5" fill="#8a8a8a"/><circle cx="964.3" cy="160.9" r="0.5" fill="#8a8a8a"/><circle cx="955.4" cy="161.6" r="0.5" fill="#8a8a8a"/><circle cx="954.1" cy="148.3" r="0.5" fill="#8a8a8a"/><circle cx="964.8" cy="145.3" r="0.5" fill="#8a8a8a"/><circle cx="955.3" cy="147.0" r="0.5" fill="#8a8a8a"/><circle cx="966.3" cy="149.4" r="0.5" fill="#8a8a8a"/><circle cx="954.3" cy="169.2" r="0.5" fill="#8a8a8a"/><circle cx="955.7" cy="169.3" r="0.5" fill="#8a8a8a"/><circle cx="963.4" cy="169.1" r="0.5" fill="#8a8a8a"/><circle cx="967.3" cy="161.4" r="0.5" fill="#8a8a8a"/><circle cx="965.2" cy="145.1" r="0.5" fill="#8a8a8a"/><circle cx="964.7" cy="159.3" r="0.5" fill="#8a8a8a"/><circle cx="964.0" cy="147.2" r="0.5" fill="#8a8a8a"/><circle cx="964.5" cy="172.0" r="0.5" fill="#8a8a8a"/><circle cx="954.9" cy="153.7" r="0.5" fill="#8a8a8a"/><circle cx="961.9" cy="168.8" r="0.5" fill="#8a8a8a"/><circle cx="957.4" cy="149.4" r="0.5" fill="#8a8a8a"/><circle cx="957.5" cy="162.5" r="0.5" fill="#8a8a8a"/><circle cx="964.5" cy="155.8" r="0.5" fill="#8a8a8a"/><circle cx="959.1" cy="155.9" r="0.5" fill="#8a8a8a"/><circle cx="958.9" cy="156.5" r="0.5" fill="#8a8a8a"/><circle cx="955.2" cy="159.0" r="0.5" fill="#8a8a8a"/><circle cx="967.6" cy="156.4" r="0.5" fill="#8a8a8a"/><circle cx="964.5" cy="148.8" r="0.5" fill="#8a8a8a"/><circle cx="963.7" cy="166.7" r="0.5" fill="#8a8a8a"/><circle cx="963.4" cy="159.5" r="0.5" fill="#8a8a8a"/><circle cx="960.8" cy="163.3" r="0.5" fill="#8a8a8a"/><circle cx="966.6" cy="148.5" r="0.5" fill="#8a8a8a"/><circle cx="955.3" cy="166.4" r="0.5" fill="#8a8a8a"/><circle cx="966.8" cy="159.5" r="0.5" fill="#8a8a8a"/><circle cx="960.2" cy="165.6" r="0.5" fill="#8a8a8a"/><path d="M845 240 Q846 232 854 232 L962 234 Q969 236 969 244 L969 282 L845 272 Z" fill="#e6e6e6"/><path d="M847 236 L967 238" stroke="#f8f8f8" stroke-width="2.5"/><path d="M845 240 L845 270 M969 244 L969 280" stroke="#8a8a8a" stroke-width="1.5"/><rect x="854" y="242" width="12" height="20" fill="#f6f6f6"/><path d="M853.5 242 L853.5 264 M866.5 242 L866.5 264" stroke="#555" stroke-width="1"/><path d="M856 252 Q860 254 864 252" stroke="#666" stroke-width="1.4" fill="none"/><circle cx="856.5" cy="239" r="1.1" fill="#333"/><circle cx="863.5" cy="239" r="1.1" fill="#333"/><path d="M851 236 L851 246 M869 236 L869 246" stroke="#777" stroke-width="0.8"/><rect x="885" y="241" width="12" height="20" fill="#f6f6f6"/><path d="M884.5 241 L884.5 263 M897.5 241 L897.5 263" stroke="#555" stroke-width="1"/><path d="M887 251 Q891 253 895 251" stroke="#666" stroke-width="1.4" fill="none"/><circle cx="887.5" cy="238" r="1.1" fill="#333"/><circle cx="894.5" cy="238" r="1.1" fill="#333"/><path d="M882 235 L882 245 M900 235 L900 245" stroke="#777" stroke-width="0.8"/><rect x="917" y="243" width="12" height="20" fill="#f6f6f6"/><path d="M916.5 243 L916.5 265 M929.5 243 L929.5 265" stroke="#555" stroke-width="1"/><path d="M919 253 Q923 255 927 253" stroke="#666" stroke-width="1.4" fill="none"/><circle cx="919.5" cy="240" r="1.1" fill="#333"/><circle cx="926.5" cy="240" r="1.1" fill="#333"/><path d="M914 237 L914 247 M932 237 L932 247" stroke="#777" stroke-width="0.8"/><rect x="949" y="246" width="12" height="20" fill="#f6f6f6"/><path d="M948.5 246 L948.5 268 M961.5 246 L961.5 268" stroke="#555" stroke-width="1"/><path d="M951 256 Q955 258 959 256" stroke="#666" stroke-width="1.4" fill="none"/><circle cx="951.5" cy="243" r="1.1" fill="#333"/><circle cx="958.5" cy="243" r="1.1" fill="#333"/><path d="M946 240 L946 250 M964 240 L964 250" stroke="#777" stroke-width="0.8"/><rect x="872" y="242" width="10" height="18" fill="#d6d6d6" stroke="#999" stroke-width="0.5"/><rect x="935" y="242" width="10" height="18" fill="#d6d6d6" stroke="#999" stroke-width="0.5"/><rect x="902" y="241" width="8" height="18" fill="#e0e0e0" stroke="#999" stroke-width="0.5"/><circle cx="852" cy="254" r="1.5" fill="none" stroke="#444" stroke-width="0.8"/><circle cx="906" cy="255" r="1.8" fill="none" stroke="#444" stroke-width="0.8"/><circle cx="962" cy="260" r="1.5" fill="none" stroke="#444" stroke-width="0.8"/><path d="M845 259 Q906 251 969 268 L969 280 Q906 262 845 271 Z" fill="#dadada"/><path d="M845 259.5 Q906 251.5 969 268.5" fill="none" stroke="#a0a0a0" stroke-width="1.8"/><path d="M845 271 Q906 262 969 280" fill="none" stroke="#333" stroke-width="1"/><linearGradient id="pg2" gradientUnits="userSpaceOnUse" x1="846" y1="0" x2="969" y2="0"><stop offset="0" stop-color="#a8a8a8"/><stop offset="0.08" stop-color="#e2e2e2"/><stop offset="0.3" stop-color="#f8f8f8"/><stop offset="0.75" stop-color="#f2f2f2"/><stop offset="0.92" stop-color="#dedede"/><stop offset="1" stop-color="#a8a8a8"/></linearGradient><path d="M845 271.5 Q906 262 969 280.5 L968 305 Q965 335 957 360 Q952 374 945 378.5 L900 379 L864 379 Q856 360 853 335 Q846 300 846 272 Z" fill="url(#pg2)"/><path d="M968.5 282 Q966 330 958 358 Q952 374 945 378" fill="none" stroke="#555" stroke-width="0.8"/><path d="M857 276 L957 285 L957 322 L902 325 M856 278 L856 312" fill="none" stroke="#9a9a9a" stroke-width="0.6" stroke-dasharray="2 2"/><circle cx="852" cy="288.5" r="2.5" fill="#f4f4f4" stroke="#222" stroke-width="1"/><circle cx="961" cy="293" r="2.5" fill="#f4f4f4" stroke="#222" stroke-width="1"/><circle cx="906.3" cy="358.5" r="2.5" fill="#eee" stroke="#555" stroke-width="0.8"/><path d="M906 327 L907 320 L925 320 L926 327" fill="#eee" stroke="#777" stroke-width="0.6"/><rect x="902.6" y="327.3" width="29.3" height="9.7" rx="2" fill="#e8e8e8" stroke="#444" stroke-width="0.8"/><path d="M906 332 L928 332 M912 329 L912 335 M920 329 L920 335" stroke="#777" stroke-width="0.9"/><linearGradient id="wg2" gradientUnits="userSpaceOnUse" x1="873" y1="0" x2="947" y2="0"><stop offset="0" stop-color="#9c9c9c"/><stop offset="0.18" stop-color="#d8d8d8"/><stop offset="0.45" stop-color="#fafafa"/><stop offset="0.7" stop-color="#e6e6e6"/><stop offset="0.9" stop-color="#c4c4c4"/><stop offset="1" stop-color="#9a9a9a"/></linearGradient><path d="M877 379.5 L940.4 379.5 Q948 395 946.5 413 L873.3 413 Q872 395 877 379.5 Z" fill="url(#wg2)"/><circle cx="882" cy="406.5" r="2.6" fill="#fff" stroke="#444" stroke-width="1"/><circle cx="937" cy="406" r="2.6" fill="#fff" stroke="#444" stroke-width="1"/><path d="M861 312.7 Q868 314 872 317.5 L886.7 326 L896.5 346.8 L901.4 371 L900 378.6 L864.7 378.6 L857.4 361.5 L852.5 342 L855 322.4 Z" fill="#e8e8e8" stroke="#555" stroke-width="0.7"/><path d="M877 317.5 L877 330 L879.5 330 L879.5 318" fill="none" stroke="#444" stroke-width="0.8"/><path d="M858 335 L862 344.4 L891.6 344.4 L893 348 M866 330 L866 344" fill="none" stroke="#444" stroke-width="0.9"/><rect x="858.6" y="356.6" width="40.4" height="17" fill="#dedede" stroke="#666" stroke-width="0.6"/><path d="M889 347 L899 347 L899 356.6 L889 356.6 Z" fill="#9a9a9a"/><path d="M858.6 365 L899 365" stroke="#999" stroke-width="0.6"/><circle cx="871" cy="343" r="2.2" fill="#eee" stroke="#444" stroke-width="0.7"/><path d="M886.7 326 L893 346 L896 372" fill="none" stroke="#555" stroke-width="0.6"/><linearGradient id="tg2" gradientUnits="userSpaceOnUse" x1="830" y1="270" x2="802" y2="305"><stop offset="0" stop-color="#f4f4f4"/><stop offset="0.6" stop-color="#e8e8e8"/><stop offset="1" stop-color="#bcbcbc"/></linearGradient><path d="M762 236.7 Q762.5 229 769 228.3 L776 228.3 Q786 230 792.5 236.7 L801.7 245 L809 256.7 L832 285.5 L841.4 296.9 L859.9 312.7 L856 322 L851 338.8 L849 348.3 L842.8 346.8 L813.5 312.7 L806 305 L791.7 290 L786.7 276.7 L782.5 266.7 L775.8 255.8 L765 242.5 Z" fill="url(#tg2)"/><path d="M786.5 278 L811 258.5" stroke="#555" stroke-width="0.8" fill="none"/><circle cx="799.2" cy="253.3" r="4.3" fill="#f0f0f0" stroke="#333" stroke-width="0.8"/><circle cx="787.5" cy="267.5" r="4.2" fill="#f0f0f0" stroke="#333" stroke-width="0.8"/><path d="M815 295 L832 284 M826 312 L846 296" stroke="#999" stroke-width="0.6" stroke-dasharray="1.5 1.5" fill="none"/><circle cx="811" cy="288" r="2" fill="none" stroke="#555" stroke-width="0.7"/><circle cx="846" cy="338" r="2" fill="none" stroke="#555" stroke-width="0.7"/><path d="M791.7 290 L806 305 L813.5 312.7 L842.8 346.8" fill="none" stroke="#b0b0b0" stroke-width="1.2"/><circle cx="775.7" cy="233.5" r="0.5" fill="#999"/><circle cx="784.1" cy="236.1" r="0.5" fill="#999"/><circle cx="781.7" cy="236.3" r="0.5" fill="#999"/><circle cx="769.5" cy="232.6" r="0.5" fill="#999"/><circle cx="768.8" cy="232.1" r="0.5" fill="#999"/><circle cx="769.0" cy="231.0" r="0.5" fill="#999"/><circle cx="779.7" cy="237.1" r="0.5" fill="#999"/><circle cx="770.7" cy="232.0" r="0.5" fill="#999"/><circle cx="785.2" cy="239.4" r="0.5" fill="#999"/><circle cx="782.8" cy="236.8" r="0.5" fill="#999"/><circle cx="792.5" cy="239.0" r="0.5" fill="#999"/><circle cx="789.9" cy="238.9" r="0.5" fill="#999"/><circle cx="771.0" cy="231.8" r="0.5" fill="#999"/><circle cx="776.7" cy="236.0" r="0.5" fill="#999"/><circle cx="772.9" cy="234.0" r="0.5" fill="#999"/><circle cx="784.4" cy="237.2" r="0.5" fill="#999"/><circle cx="781.4" cy="235.2" r="0.5" fill="#999"/><circle cx="769.0" cy="231.4" r="0.5" fill="#999"/><circle cx="785.5" cy="237.8" r="0.5" fill="#999"/><circle cx="776.3" cy="235.2" r="0.5" fill="#999"/><circle cx="779.4" cy="235.3" r="0.5" fill="#999"/><circle cx="789.1" cy="239.9" r="0.5" fill="#999"/><circle cx="774.5" cy="234.5" r="0.5" fill="#999"/><circle cx="782.4" cy="238.2" r="0.5" fill="#999"/><circle cx="786.5" cy="237.7" r="0.5" fill="#999"/></svg>
<div class="a" style="left:1203px;top:85px;width:270px;height:22px;background:#b7b7b7"></div>
<svg class="a" style="left:1207px;top:90px;" width="20" height="12" viewBox="0 0 20 12"><path d="M1 2 L5 6 L1 10 Z" fill="#333"/><rect x="5" y="1.5" width="13" height="9" rx="3" fill="#333"/></svg>
<div class="t" style="left:1229.00px;top:88.95px;font-size:14.95px;line-height:14.95px;">Views</div>
<svg class="a" style="left:1454.5px;top:88px;" width="17" height="16" viewBox="0 0 17 16"><rect x="0.5" y="0.5" width="16" height="15" rx="2.5" fill="#fbfbfb" stroke="#a4a4a4"/><circle cx="8.5" cy="8" r="5.3" fill="#d0142c"/><path d="M6.6 6.1 L10.4 9.9 M10.4 6.1 L6.6 9.9" stroke="#fff" stroke-width="1.2"/></svg>
<div class="t" style="left:1205.40px;top:118.57px;font-size:14.68px;line-height:14.68px;">Type:</div>
<div class="a" style="left:1249px;top:113px;width:136px;height:24px;border:1px solid #b4b4b4;border-radius:3px;background:linear-gradient(#fdfdfd,#eeeeee)"></div>
<div class="t" style="left:1253.40px;top:117.92px;font-size:15.45px;line-height:15.45px;">Orbit (rviz)</div>
<svg class="a" style="left:1370px;top:122px;" width="8" height="5" viewBox="0 0 8 5"><path d="M0 0 L8 0 L4 4 Z" fill="#555"/></svg>
<div class="a" style="left:1392px;top:113px;width:79px;height:24px;border:1px solid #b4b4b4;border-radius:3px;background:linear-gradient(#fdfdfd,#eeeeee)"></div>
<div class="t" style="left:1416.50px;top:118.65px;font-size:14.59px;line-height:14.59px;">Zero</div>
<div class="a" style="left:1203px;top:146px;width:271px;height:562px;background:#fff;border:1px solid #b0b0b0;border-right:none"></div>
<div class="a" style="left:1316px;top:147px;width:1px;height:560px;background:#dcdcdc"></div>
<svg class="a" style="left:1209px;top:151px;" width="10" height="8" viewBox="0 0 10 8"><path d="M0.5 1 L8.5 1 L4.5 6 Z" fill="#555"/></svg>
<div class="t" style="left:1227.40px;top:147.90px;font-size:15.59px;line-height:15.59px;font-weight:bold;">Current V...</div>
<div class="t" style="left:1319.30px;top:148.09px;font-size:15.37px;line-height:15.37px;font-weight:bold;">Orbit (rviz)</div>
<div class="t" style="left:1247.50px;top:165.57px;font-size:14.80px;line-height:14.80px;">Near Cl...</div>
<div class="t" style="left:1319.30px;top:165.57px;font-size:14.80px;line-height:14.80px;">0.01</div>
<div class="t" style="left:1247.50px;top:182.57px;font-size:14.80px;line-height:14.80px;">Invert ...</div>
<div class="cb" style="left:1319px;top:183.1px;width:14px;height:14px"></div>
<div class="t" style="left:1247.50px;top:199.57px;font-size:14.80px;line-height:14.80px;">Target ...</div>
<div class="t" style="left:1319.30px;top:199.57px;font-size:14.80px;line-height:14.80px;">&lt;Fixed Frame&gt;</div>
<div class="t" style="left:1247.50px;top:216.57px;font-size:14.80px;line-height:14.80px;">Distance</div>
<div class="t" style="left:1319.30px;top:216.57px;font-size:14.80px;line-height:14.80px;">0.520957</div>
<div class="t" style="left:1247.50px;top:233.57px;font-size:14.80px;line-height:14.80px;">Focal S...</div>
<div class="t" style="left:1319.30px;top:233.57px;font-size:14.80px;line-height:14.80px;">0.05</div>
<div class="t" style="left:1247.50px;top:250.57px;font-size:14.80px;line-height:14.80px;">Focal S...</div>
<div class="cb" style="left:1319px;top:251.1px;width:14px;height:14px"></div>
<svg class="a" style="left:1320px;top:251px;" width="13" height="13" viewBox="0 0 13 13"><path d="M3 6.5 L5.8 10 L10 2.5" fill="none" stroke="#111" stroke-width="1.6"/></svg>
<div class="t" style="left:1247.50px;top:267.57px;font-size:14.80px;line-height:14.80px;">Yaw</div>
<div class="t" style="left:1319.30px;top:267.57px;font-size:14.80px;line-height:14.80px;">3.1554</div>
<div class="t" style="left:1247.50px;top:284.57px;font-size:14.80px;line-height:14.80px;">Pitch</div>
<div class="t" style="left:1319.30px;top:284.57px;font-size:14.80px;line-height:14.80px;">-1.5598</div>
<div class="t" style="left:1247.50px;top:301.57px;font-size:14.80px;line-height:14.80px;">Field o...</div>
<div class="t" style="left:1319.30px;top:301.57px;font-size:14.80px;line-height:14.80px;">0.785398</div>
<div class="t" style="left:1247.50px;top:318.57px;font-size:14.80px;line-height:14.80px;">Focal P...</div>
<div class="t" style="left:1319.30px;top:318.57px;font-size:14.80px;line-height:14.80px;">0; 0; 0</div>
<svg class="a" style="left:1230px;top:320px;" width="6" height="9" viewBox="0 0 6 9"><path d="M1 0.5 L5.5 4.5 L1 8.5 Z" fill="#555"/></svg>
<div class="a" style="left:1205px;top:714px;width:85px;height:24px;border:1px solid #b4b4b4;border-radius:3px;background:linear-gradient(#fdfdfd,#eeeeee)"></div>
<div class="t" style="left:1231.80px;top:720.67px;font-size:13.38px;line-height:13.38px;">Save</div>
<div class="a" style="left:1296px;top:714px;width:84px;height:24px;border:1px solid #b4b4b4;border-radius:3px;background:linear-gradient(#fdfdfd,#eeeeee)"></div>
<div class="t" style="left:1311.50px;top:719.75px;font-size:14.48px;line-height:14.48px;">Remove</div>
<div class="a" style="left:1387px;top:714px;width:84px;height:24px;border:1px solid #b4b4b4;border-radius:3px;background:linear-gradient(#fdfdfd,#eeeeee)"></div>
<div class="t" style="left:1402.00px;top:719.75px;font-size:14.47px;line-height:14.47px;">Rename</div>
<svg class="a" style="left:1186px;top:409px;" width="6" height="8" viewBox="0 0 6 8"><path d="M1 0 L5.5 4 L1 8 Z" fill="#555"/></svg>
<div class="a" style="left:1200px;top:406px;width:1px;height:1px;background:#999"></div>
<div class="a" style="left:1200px;top:409px;width:1px;height:1px;background:#999"></div>
<div class="a" style="left:1200px;top:412px;width:1px;height:1px;background:#999"></div>
<div class="a" style="left:1200px;top:415px;width:1px;height:1px;background:#999"></div>
<div class="a" style="left:1200px;top:418px;width:1px;height:1px;background:#999"></div>
<div class="a" style="left:1200px;top:421px;width:1px;height:1px;background:#999"></div>
<div class="a" style="left:867px;top:743px;width:1px;height:1px;background:#888"></div>
<div class="a" style="left:870px;top:743px;width:1px;height:1px;background:#888"></div>
<div class="a" style="left:873px;top:743px;width:1px;height:1px;background:#888"></div>
<div class="a" style="left:876px;top:743px;width:1px;height:1px;background:#888"></div>
<div class="a" style="left:879px;top:743px;width:1px;height:1px;background:#888"></div>
<div class="a" style="left:882px;top:743px;width:1px;height:1px;background:#888"></div>
<div class="a" style="left:274px;top:747px;width:1200px;height:22px;background:#b7b7b7"></div>
<svg class="a" style="left:277px;top:750px;" width="17" height="17" viewBox="0 0 17 17"><circle cx="8.5" cy="8.5" r="7" fill="#fff" stroke="#444" stroke-width="1.6"/><path d="M8 4 L8 9 L12 9" fill="none" stroke="#222" stroke-width="1.4"/></svg>
<div class="t" style="left:300.40px;top:751.77px;font-size:14.92px;line-height:14.92px;">Time</div>
<svg class="a" style="left:1455px;top:750px;" width="17" height="16" viewBox="0 0 17 16"><rect x="0.5" y="0.5" width="16" height="15" rx="2.5" fill="#fbfbfb" stroke="#a4a4a4"/><circle cx="8.5" cy="8" r="5.3" fill="#d0142c"/><path d="M6.6 6.1 L10.4 9.9 M10.4 6.1 L6.6 9.9" stroke="#fff" stroke-width="1.2"/></svg>
<div class="a" style="left:285px;top:776px;width:80px;height:25px;border:1px solid #b4b4b4;border-radius:3px;background:linear-gradient(#fdfdfd,#eeeeee)"></div>
<svg class="a" style="left:296px;top:781px;" width="16" height="15" viewBox="0 0 16 15"><rect x="1" y="1" width="5" height="13" fill="#c8c8c8" stroke="#888" stroke-width="0.8"/><rect x="8" y="1" width="5" height="13" fill="#c8c8c8" stroke="#888" stroke-width="0.8"/></svg>
<div class="t" style="left:313.40px;top:782.83px;font-size:13.79px;line-height:13.79px;">Pause</div>
<div class="t" style="left:381.00px;top:782.02px;font-size:15.22px;line-height:15.22px;">Synchronization:</div>
<div class="a" style="left:500px;top:776px;width:120px;height:25px;border:1px solid #b4b4b4;border-radius:3px;background:linear-gradient(#fdfdfd,#eeeeee)"></div>
<div class="t" style="left:505.00px;top:782.03px;font-size:15.21px;line-height:15.21px;">Off</div>
<svg class="a" style="left:603px;top:787px;" width="8" height="5" viewBox="0 0 8 5"><path d="M0 0 L8 0 L4 4 Z" fill="#555"/></svg>
<div class="t" style="left:635.80px;top:782.94px;font-size:14.13px;line-height:14.13px;">ROS Time:</div>
<div class="a" style="left:712px;top:776px;width:116px;height:25px;background:#fff;border:1px solid #b0b0b0;border-radius:2px"></div>
<div class="t" style="left:715.90px;top:782.28px;font-size:14.90px;line-height:14.90px;">1766384167.68</div>
<div class="t" style="left:834.00px;top:783.06px;font-size:13.98px;line-height:13.98px;">ROS Elapsed:</div>
<div class="a" style="left:930px;top:776px;width:116px;height:25px;background:#fff;border:1px solid #b0b0b0;border-radius:2px"></div>
<div class="t" style="left:933.00px;top:782.18px;font-size:15.03px;line-height:15.03px;">49.33</div>
<div class="t" style="left:1052.00px;top:782.10px;font-size:15.12px;line-height:15.12px;">Wall Time:</div>
<div class="a" style="left:1129px;top:776px;width:116px;height:25px;background:#fff;border:1px solid #b0b0b0;border-radius:2px"></div>
<div class="t" style="left:1132.00px;top:782.17px;font-size:15.03px;line-height:15.03px;">1766384167.71</div>
<div class="t" style="left:1251.50px;top:782.46px;font-size:14.70px;line-height:14.70px;">Wall Elapsed:</div>
<div class="a" style="left:1347px;top:776px;width:116px;height:25px;background:#fff;border:1px solid #b0b0b0;border-radius:2px"></div>
<div class="t" style="left:1350.40px;top:782.18px;font-size:15.03px;line-height:15.03px;">49.30</div>
<div class="a" style="left:276px;top:812px;width:53px;height:24px;border:1px solid #b4b4b4;border-radius:3px;background:linear-gradient(#fdfdfd,#eeeeee)"></div>
<div class="t" style="left:283.10px;top:817.26px;font-size:14.82px;line-height:14.82px;">Reset</div>
<div class="t" style="left:1408.80px;top:813.29px;font-size:15.02px;line-height:15.02px;">31 fps</div>
<div class="a" style="left:274px;top:838px;width:1200px;height:1px;background:#7a7a7a"></div>
<div class="a" style="left:274px;top:839px;width:1200px;height:1px;background:#bdbdbd"></div>
<div class="a" style="left:1471px;top:826px;width:1.3px;height:1.3px;background:#a0a0a0"></div>
<div class="a" style="left:1468px;top:829px;width:1.3px;height:1.3px;background:#a0a0a0"></div>
<div class="a" style="left:1471px;top:829px;width:1.3px;height:1.3px;background:#a0a0a0"></div>
<div class="a" style="left:1465px;top:832px;width:1.3px;height:1.3px;background:#a0a0a0"></div>
<div class="a" style="left:1468px;top:832px;width:1.3px;height:1.3px;background:#a0a0a0"></div>
<div class="a" style="left:1471px;top:832px;width:1.3px;height:1.3px;background:#a0a0a0"></div>
<div class="a" style="left:1462px;top:835px;width:1.3px;height:1.3px;background:#a0a0a0"></div>
<div class="a" style="left:1465px;top:835px;width:1.3px;height:1.3px;background:#a0a0a0"></div>
<div class="a" style="left:1468px;top:835px;width:1.3px;height:1.3px;background:#a0a0a0"></div>
<div class="a" style="left:1471px;top:835px;width:1.3px;height:1.3px;background:#a0a0a0"></div>
<div class="a" style="left:7px;top:3px;width:280px;height:647px;box-shadow:0 2px 14px 2px rgba(0,0,0,0.35);border-radius:7px 7px 0 0"></div>
<div class="a" style="left:7px;top:39px;width:280px;height:611px;background:#efefef;border:1px solid #c4c4c4;border-top:none"></div>
<div class="a" style="left:7px;top:3px;width:280px;height:37px;background:#3c3b38;border-radius:7px 7px 0 0"></div>
<div class="t" style="left:37.00px;top:13.93px;font-size:15.08px;line-height:15.08px;font-weight:bold;color:#f5f5f5;">Joint State Publisher</div>
<div class="a" style="left:197px;top:23px;width:8px;height:1px;background:#c8c8c8"></div>
<div class="a" style="left:231px;top:17px;width:8px;height:8px;border:1px solid #d8d8d8"></div>
<div class="a" style="left:260px;top:12px;width:18px;height:18px;background:#5d5c5a;border-radius:50%"></div>
<svg class="a" style="left:264px;top:16px;" width="10" height="10" viewBox="0 0 10 10"><path d="M1 1 L9 9 M9 1 L1 9" stroke="#fff" stroke-width="1.5"/></svg>
<div class="a" style="left:16px;top:49px;width:262px;height:25px;border:1px solid #b4b4b4;border-radius:3px;background:linear-gradient(#fdfdfd,#eeeeee)"></div>
<div class="t" style="left:110.00px;top:55.03px;font-size:14.73px;line-height:14.73px;">Randomize</div>
<div class="a" style="left:16px;top:80px;width:262px;height:25px;border:1px solid #b4b4b4;border-radius:3px;background:linear-gradient(#fdfdfd,#eeeeee)"></div>
<div class="t" style="left:126.50px;top:86.89px;font-size:13.83px;line-height:13.83px;">Center</div>
<div class="a" style="left:16px;top:111px;width:262px;height:530px;border:1px solid #b4b4b4;background:#efefef"></div>
<div class="t" style="left:35.20px;top:141.74px;font-size:12.00px;line-height:12.00px;font-weight:bold;color:#111;-webkit-text-stroke:0">if_slider_link</div>
<div class="a" style="left:214px;top:134.9px;width:45px;height:25px;background:#fff;border:1px solid #b0b0b0;border-radius:2px"></div>
<div class="t" style="left:223.80px;top:141.74px;font-size:12.00px;line-height:12.00px;font-weight:bold;color:#111;-webkit-text-stroke:0">0.000</div>
<div class="a" style="left:36px;top:175.5px;width:198px;height:6px;background:linear-gradient(#c8c8c8,#e0e0e0);border:1px solid #b0b0b0;border-radius:3px"></div>
<div class="a" style="left:36px;top:172.0px;width:13px;height:13px;background:linear-gradient(#ffffff,#ececec);border:1px solid #a8a8a8;border-radius:3px"></div>
<div class="t" style="left:35.20px;top:227.74px;font-size:12.00px;line-height:12.00px;font-weight:bold;color:#111;-webkit-text-stroke:0">mf_slider_link</div>
<div class="a" style="left:214px;top:220.9px;width:45px;height:25px;background:#fff;border:1px solid #b0b0b0;border-radius:2px"></div>
<div class="t" style="left:223.80px;top:227.74px;font-size:12.00px;line-height:12.00px;font-weight:bold;color:#111;-webkit-text-stroke:0">0.000</div>
<div class="a" style="left:36px;top:261.5px;width:198px;height:6px;background:linear-gradient(#c8c8c8,#e0e0e0);border:1px solid #b0b0b0;border-radius:3px"></div>
<div class="a" style="left:36px;top:258.0px;width:13px;height:13px;background:linear-gradient(#ffffff,#ececec);border:1px solid #a8a8a8;border-radius:3px"></div>
<div class="t" style="left:35.20px;top:313.74px;font-size:12.00px;line-height:12.00px;font-weight:bold;color:#111;-webkit-text-stroke:0">rf_slider_link</div>
<div class="a" style="left:214px;top:306.9px;width:45px;height:25px;background:#fff;border:1px solid #b0b0b0;border-radius:2px"></div>
<div class="t" style="left:223.80px;top:313.74px;font-size:12.00px;line-height:12.00px;font-weight:bold;color:#111;-webkit-text-stroke:0">0.000</div>
<div class="a" style="left:36px;top:347.5px;width:198px;height:6px;background:linear-gradient(#c8c8c8,#e0e0e0);border:1px solid #b0b0b0;border-radius:3px"></div>
<div class="a" style="left:36px;top:344.0px;width:13px;height:13px;background:linear-gradient(#ffffff,#ececec);border:1px solid #a8a8a8;border-radius:3px"></div>
<div class="t" style="left:35.20px;top:399.74px;font-size:12.00px;line-height:12.00px;font-weight:bold;color:#111;-webkit-text-stroke:0">lf_slider_link</div>
<div class="a" style="left:214px;top:392.9px;width:45px;height:25px;background:#fff;border:1px solid #b0b0b0;border-radius:2px"></div>
<div class="t" style="left:223.80px;top:399.74px;font-size:12.00px;line-height:12.00px;font-weight:bold;color:#111;-webkit-text-stroke:0">0.000</div>
<div class="a" style="left:36px;top:433.5px;width:198px;height:6px;background:linear-gradient(#c8c8c8,#e0e0e0);border:1px solid #b0b0b0;border-radius:3px"></div>
<div class="a" style="left:36px;top:430.0px;width:13px;height:13px;background:linear-gradient(#ffffff,#ececec);border:1px solid #a8a8a8;border-radius:3px"></div>
<div class="t" style="left:35.20px;top:485.74px;font-size:12.00px;line-height:12.00px;font-weight:bold;color:#111;-webkit-text-stroke:0">th_root_link</div>
<div class="a" style="left:214px;top:478.9px;width:45px;height:25px;background:#fff;border:1px solid #b0b0b0;border-radius:2px"></div>
<div class="t" style="left:223.80px;top:485.74px;font-size:12.00px;line-height:12.00px;font-weight:bold;color:#111;-webkit-text-stroke:0">0.000</div>
<div class="a" style="left:36px;top:519.5px;width:198px;height:6px;background:linear-gradient(#c8c8c8,#e0e0e0);border:1px solid #b0b0b0;border-radius:3px"></div>
<div class="a" style="left:36px;top:516.0px;width:13px;height:13px;background:linear-gradient(#ffffff,#ececec);border:1px solid #a8a8a8;border-radius:3px"></div>
<div class="t" style="left:35.20px;top:571.74px;font-size:12.00px;line-height:12.00px;font-weight:bold;color:#111;-webkit-text-stroke:0">th_slider_link</div>
<div class="a" style="left:214px;top:564.9px;width:45px;height:25px;background:#fff;border:1px solid #b0b0b0;border-radius:2px"></div>
<div class="t" style="left:223.80px;top:571.74px;font-size:12.00px;line-height:12.00px;font-weight:bold;color:#111;-webkit-text-stroke:0">0.000</div>
<div class="a" style="left:36px;top:605.5px;width:198px;height:6px;background:linear-gradient(#c8c8c8,#e0e0e0);border:1px solid #b0b0b0;border-radius:3px"></div>
<div class="a" style="left:36px;top:602.0px;width:13px;height:13px;background:linear-gradient(#ffffff,#ececec);border:1px solid #a8a8a8;border-radius:3px"></div>
</body></html>
